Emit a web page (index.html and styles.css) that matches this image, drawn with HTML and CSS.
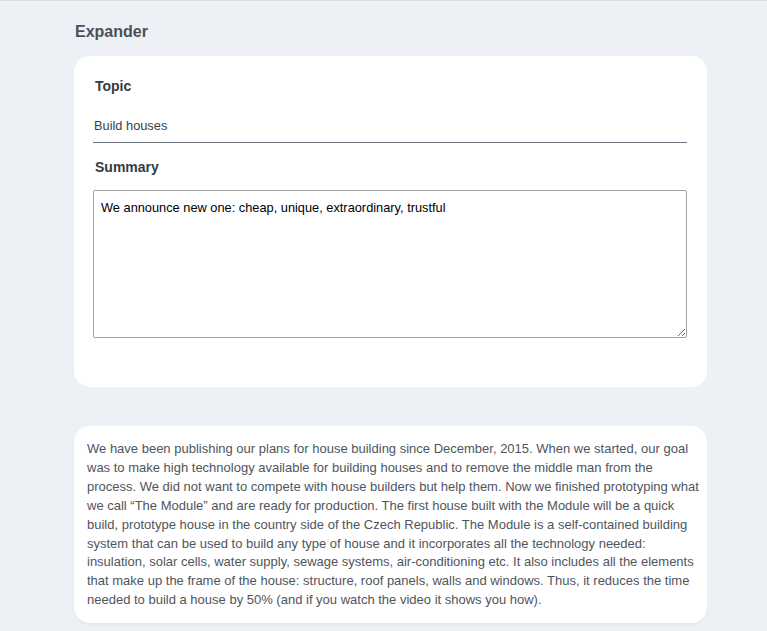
FILE: index.html
```html
<!DOCTYPE html>
<html lang="en">
<head>
<meta charset="utf-8">
<title>Expander</title>
<link rel="stylesheet" href="styles.css">
</head>
<body>
<div class="page">
  <h2 class="title">Expander</h2>
  <section class="card form-card">
    <label class="label" for="topic">Topic</label>
    <input class="topic-input" id="topic" type="text" value="Build houses">
    <label class="label summary-label" for="summary">Summary</label>
    <textarea class="summary" id="summary">We announce new one: cheap, unique, extraordinary, trustful</textarea>
  </section>
  <section class="card text-card">
    <p class="body-text"><span class="line">We have been publishing our plans for house building since December, 2015. When we started, our goal</span>
<span class="line">was to make high technology available for building houses and to remove the middle man from the</span>
<span class="line">process. We did not want to compete with house builders but help them. Now we finished prototyping what</span>
<span class="line">we call “The Module” and are ready for production. The first house built with the Module will be a quick</span>
<span class="line">build, prototype house in the country side of the Czech Republic. The Module is a self-contained building</span>
<span class="line">system that can be used to build any type of house and it incorporates all the technology needed:</span>
<span class="line">insulation, solar cells, water supply, sewage systems, air-conditioning etc. It also includes all the elements</span>
<span class="line">that make up the frame of the house: structure, roof panels, walls and windows. Thus, it reduces the time</span>
<span class="line">needed to build a house by 50% (and if you watch the video it shows you how).</span></p>
  </section>
</div>
</body>
</html>
```

FILE: styles.css
```css
html, body {
  margin: 0;
  padding: 0;
}
body {
  background: #edf1f5;
  border-top: 1px solid #d9dde2;
  font-family: "Liberation Sans", Arial, sans-serif;
  min-height: 630px;
}
.page {
  padding: 21px 60px 0 74px;
}
.title {
  margin: 0 0 14px 1px;
  font-size: 16px;
  line-height: 20px;
  font-weight: bold;
  color: #4b5058;
}
.card {
  background: #ffffff;
  border-radius: 16px;
}
.form-card {
  display: flex;
  flex-direction: column;
  padding: 21px 20px 49px 19px;
}
.label {
  display: block;
  margin: 0 0 7px 2px;
  font-size: 14px;
  line-height: 18px;
  font-weight: bold;
  color: #343a44;
}
.topic-input {
  box-sizing: border-box;
  width: 100%;
  height: 41px;
  margin: 0;
  padding: 6px 1px 0 1px;
  border: none;
  border-bottom: 1px solid #6e7480;
  outline: none;
  background: transparent;
  font-family: "Liberation Sans", Arial, sans-serif;
  font-size: 12.8px;
  color: #3a3f47;
}
.summary-label {
  margin-top: 15px;
  margin-bottom: 14px;
}
.summary {
  box-sizing: border-box;
  width: 100%;
  height: 148px;
  margin: 0;
  padding: 9px 7px 8px;
  border: 1px solid #9ea3ab;
  border-radius: 2px;
  font-family: "Liberation Sans", Arial, sans-serif;
  font-size: 12.8px;
  line-height: 16px;
  color: #000000;
  background: #ffffff;
  resize: vertical;
}
.text-card {
  margin-top: 39px;
  padding: 14px 13px 13px 13px;
  box-shadow: 0 2px 3px rgba(0, 0, 0, 0.04);
}
.body-text {
  margin: 0;
  font-size: 13px;
  line-height: 18.9px;
  color: #50555d;
}
.line {
  display: block;
  white-space: nowrap;
}
```
